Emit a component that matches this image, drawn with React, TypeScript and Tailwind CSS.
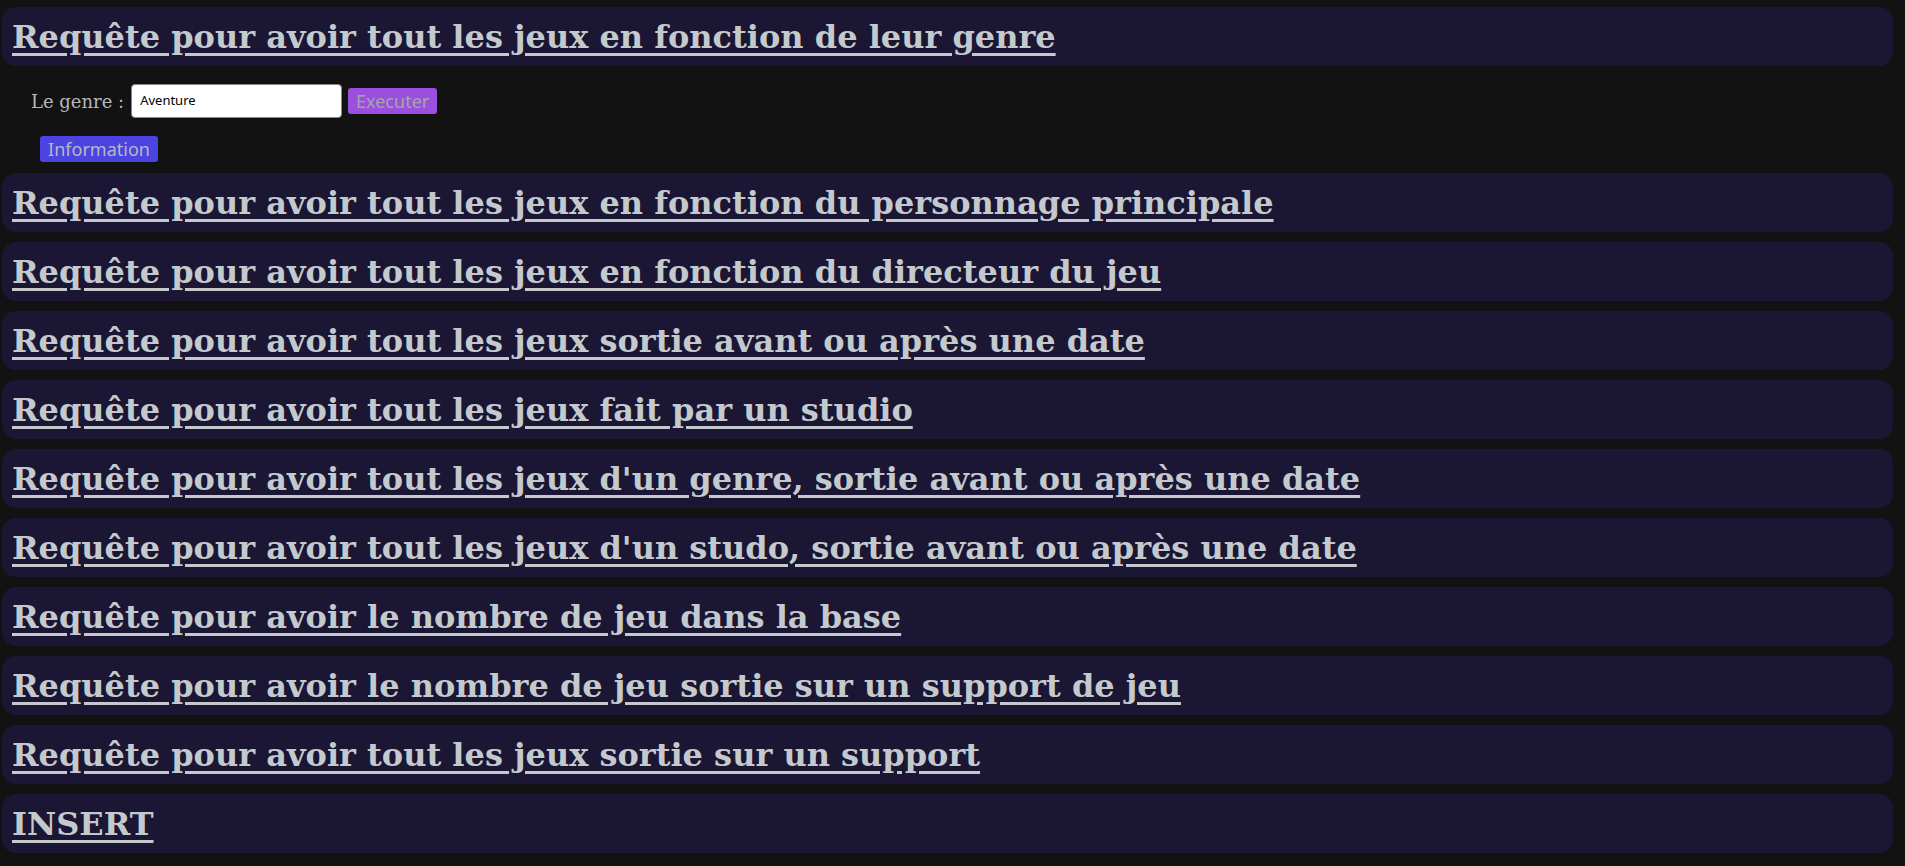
import React from "react";

const titles = [
  "Requête pour avoir tout les jeux en fonction du personnage principale",
  "Requête pour avoir tout les jeux en fonction du directeur du jeu",
  "Requête pour avoir tout les jeux sortie avant ou après une date",
  "Requête pour avoir tout les jeux fait par un studio",
  "Requête pour avoir tout les jeux d'un genre, sortie avant ou après une date",
  "Requête pour avoir tout les jeux d'un studo, sortie avant ou après une date",
  "Requête pour avoir le nombre de jeu dans la base",
  "Requête pour avoir le nombre de jeu sortie sur un support de jeu",
  "Requête pour avoir tout les jeux sortie sur un support",
  "INSERT",
];

function Header({ title }: { title: string }) {
  return (
    <div className="ml-[2px] mr-[12px] h-[59px] rounded-[14px] bg-[#1a1633] flex items-center pl-[10px]">
      <h1
        className="text-[32px] font-bold underline decoration-[3px] underline-offset-[5px] text-[#c3c9cc] leading-none"
        style={{ fontFamily: '"DejaVu Serif", serif' }}
      >
        {title}
      </h1>
    </div>
  );
}

export default function App() {
  return (
    <div className="min-h-screen bg-[#121212] pt-[7px] pb-[14px]">
      <Header title="Requête pour avoir tout les jeux en fonction de leur genre" />
      <div className="flex items-center mt-[18px] pl-[31px] h-[34px]">
        <span
          className="text-[18px] text-[#b5b9bc] mr-[7px]"
          style={{ fontFamily: '"DejaVu Serif", serif' }}
        >
          Le genre :
        </span>
        <div
          className="w-[211px] h-[34px] bg-white rounded-[4px] border border-[#888] flex items-center pl-[8px] text-[13px] text-black"
          style={{ fontFamily: '"Noto Sans", sans-serif' }}
        >
          Aventure
        </div>
        <button
          className="ml-[6px] w-[89px] h-[26px] bg-[#9b4fdf] rounded-[3px] text-[18px] text-[#a3a6a6] leading-none"
          style={{ fontFamily: '"Noto Sans", sans-serif' }}
        >
          Executer
        </button>
      </div>
      <div className="mt-[18px] pl-[40px]">
        <button
          className="w-[118px] h-[26px] bg-[#4b44e0] rounded-[3px] text-[18px] text-[#b5b9c4] leading-none"
          style={{ fontFamily: '"Noto Sans", sans-serif' }}
        >
          Information
        </button>
      </div>
      <div className="mt-[11px] flex flex-col gap-[10px]">
        {titles.map((t) => (
          <Header key={t} title={t} />
        ))}
      </div>
    </div>
  );
}
